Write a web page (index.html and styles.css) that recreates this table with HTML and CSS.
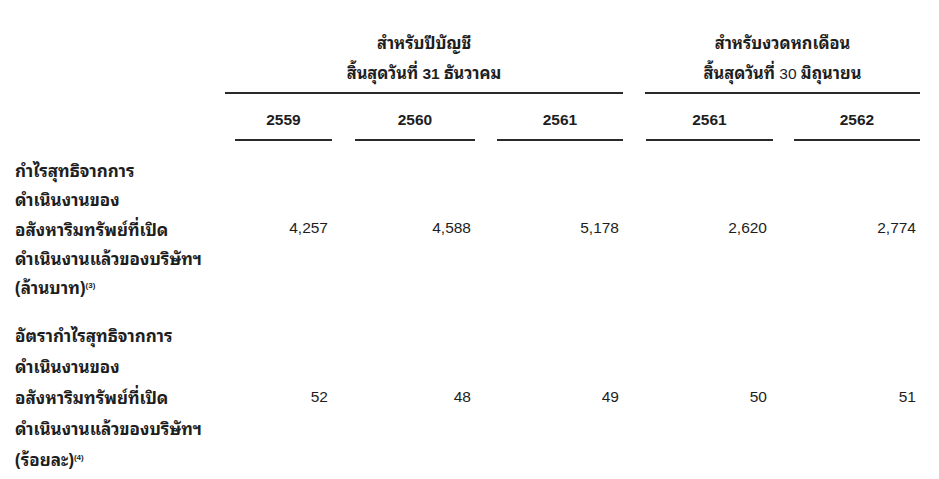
FILE: index.html
```html
<!DOCTYPE html>
<html lang="th">
<head>
<meta charset="utf-8">
<title>ตาราง</title>
<link rel="stylesheet" href="styles.css">
</head>
<body>
<div class="table">
  <div class="blank head-group"></div>
  <div class="group g1"><div class="group-in"><div>สำหรับปีบัญชี</div><div>สิ้นสุดวันที่ <b class="num-b">31</b> ธันวาคม</div></div></div>
  <div class="group g2"><div class="group-in"><div>สำหรับงวดหกเดือน</div><div>สิ้นสุดวันที่ <span class="num-r">30</span> มิถุนายน</div></div></div>

  <div class="blank"></div>
  <div class="year y1"><div class="year-in">2559</div></div>
  <div class="year y2"><div class="year-in">2560</div></div>
  <div class="year y3"><div class="year-in">2561</div></div>
  <div class="year y4"><div class="year-in">2561</div></div>
  <div class="year y5"><div class="year-in">2562</div></div>

  <div class="label first">กำไรสุทธิจากการ<br>ดำเนินงานของ<br>อสังหาริมทรัพย์ที่เปิด<br>ดำเนินงานแล้วของบริษัทฯ<br>(ล้านบาท)<sup>(3)</sup></div>
  <div class="val first">4,257</div>
  <div class="val first">4,588</div>
  <div class="val first">5,178</div>
  <div class="val first v4">2,620</div>
  <div class="val first">2,774</div>

  <div class="label second">อัตรากำไรสุทธิจากการ<br>ดำเนินงานของ<br>อสังหาริมทรัพย์ที่เปิด<br>ดำเนินงานแล้วของบริษัทฯ<br>(ร้อยละ)<sup>(4)</sup></div>
  <div class="val second">52</div>
  <div class="val second">48</div>
  <div class="val second">49</div>
  <div class="val second v4">50</div>
  <div class="val second">51</div>
</div>
</body>
</html>
```
FILE: styles.css
```css
html, body {
  margin: 0;
  padding: 0;
  background: #ffffff;
}
body {
  width: 939px;
  height: 479px;
  overflow: hidden;
  color: #1e1e1e;
  font-family: "Noto Sans Thai Looped", "Tahoma", "Noto Sans Thai", "Loma", "Garuda", "Liberation Sans", sans-serif;
}
.table {
  display: grid;
  grid-template-columns: 225px 107px 143px 148px 150px 147px;
}
.group {
  padding-top: 27px;
  font-weight: bold;
  font-size: 16.4px;
  line-height: 30px;
  text-align: center;
}
.group-in {
  border-bottom: 2px solid #2a2a2a;
  padding-bottom: 3px;
}
.g1 { grid-column: 2 / span 3; }
.g2 { grid-column: 5 / span 2; padding-left: 22px; }
.num-b { font-family: "Liberation Sans", sans-serif; font-size: 15.5px; font-weight: bold; }
.num-r { font-family: "Liberation Sans", sans-serif; font-size: 15.5px; font-weight: normal; }

.year {
  padding-top: 16px;
  font-family: "Liberation Sans", sans-serif;
  font-weight: bold;
  font-size: 15.5px;
  line-height: 20px;
  text-align: center;
}
.year-in {
  border-bottom: 2px solid #2a2a2a;
  padding-bottom: 9px;
}
.y1 { padding-left: 10px; }
.y2 { padding-left: 23px; }
.y3 { padding-left: 22px; }
.y4 { padding-left: 23px; }
.y5 { padding-left: 21px; }

.label {
  padding-left: 15px;
  font-weight: bold;
  font-size: 17px;
  white-space: nowrap;
}
.label sup {
  font-family: "Liberation Sans", sans-serif;
  font-size: 8px;
  line-height: 0;
  vertical-align: 6px;
}
.label.first { line-height: 29.25px; }
.label.second { line-height: 31px; }
.first { margin-top: 14px; }
.second { margin-top: 18px; }
.val {
  display: flex;
  align-items: center;
  justify-content: flex-end;
  padding-right: 4px;
  font-family: "Liberation Sans", sans-serif;
  font-size: 15.5px;
}
.v4 { padding-right: 6px; }
```
